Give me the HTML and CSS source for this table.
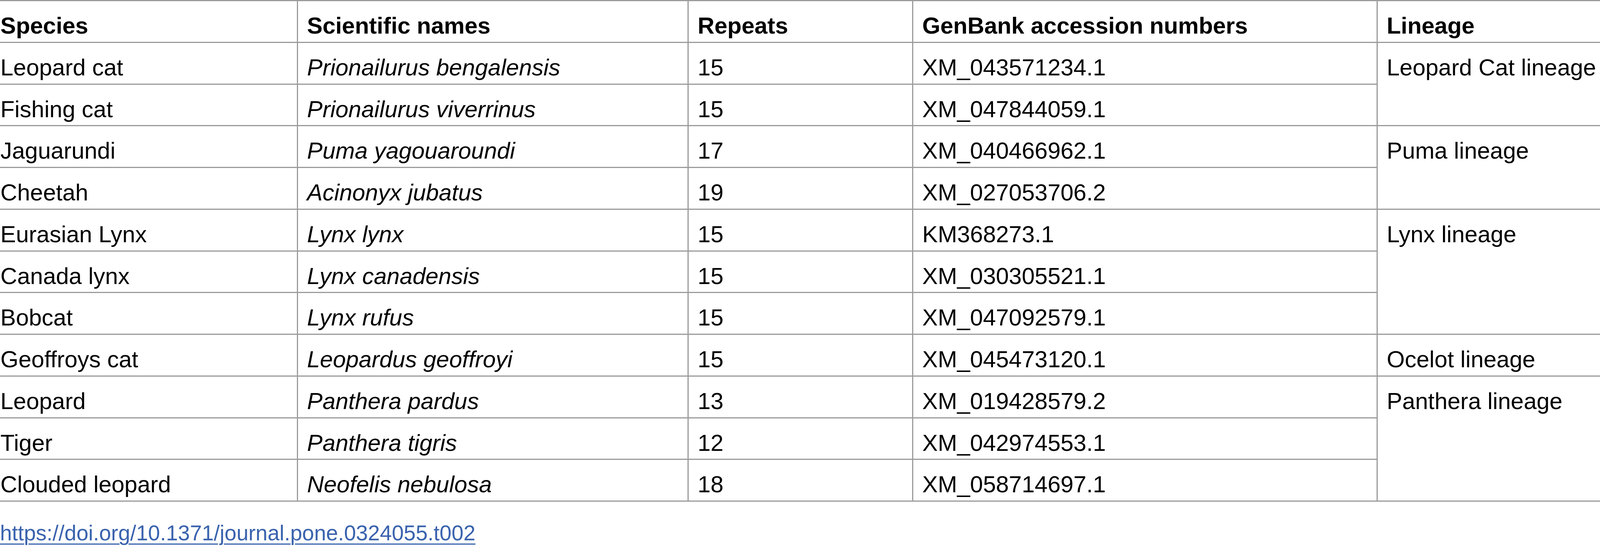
FILE: index.html
```html
<!DOCTYPE html>
<html lang="en">
<head>
<meta charset="utf-8">
<title>Table 2</title>
<link rel="stylesheet" href="styles.css">
</head>
<body>
<div class="page">
  <table class="data">
    <colgroup>
      <col class="c1"><col class="c2"><col class="c3"><col class="c4"><col class="c5">
    </colgroup>
    <thead>
      <tr><th>Species</th><th>Scientific names</th><th>Repeats</th><th>GenBank accession numbers</th><th class="last">Lineage</th></tr>
    </thead>
    <tbody>
      <tr><td>Leopard cat</td><td class="sci">Prionailurus bengalensis</td><td>15</td><td>XM_043571234.1</td><td class="last" rowspan="2">Leopard Cat lineage</td></tr>
      <tr><td>Fishing cat</td><td class="sci">Prionailurus viverrinus</td><td>15</td><td>XM_047844059.1</td></tr>
      <tr><td>Jaguarundi</td><td class="sci">Puma yagouaroundi</td><td>17</td><td>XM_040466962.1</td><td class="last" rowspan="2">Puma lineage</td></tr>
      <tr><td>Cheetah</td><td class="sci">Acinonyx jubatus</td><td>19</td><td>XM_027053706.2</td></tr>
      <tr><td>Eurasian Lynx</td><td class="sci">Lynx lynx</td><td>15</td><td>KM368273.1</td><td class="last" rowspan="3">Lynx lineage</td></tr>
      <tr><td>Canada lynx</td><td class="sci">Lynx canadensis</td><td>15</td><td>XM_030305521.1</td></tr>
      <tr><td>Bobcat</td><td class="sci">Lynx rufus</td><td>15</td><td>XM_047092579.1</td></tr>
      <tr><td>Geoffroys cat</td><td class="sci">Leopardus geoffroyi</td><td>15</td><td>XM_045473120.1</td><td class="last">Ocelot lineage</td></tr>
      <tr><td>Leopard</td><td class="sci">Panthera pardus</td><td>13</td><td>XM_019428579.2</td><td class="last" rowspan="3">Panthera lineage</td></tr>
      <tr><td>Tiger</td><td class="sci">Panthera tigris</td><td>12</td><td>XM_042974553.1</td></tr>
      <tr><td>Clouded leopard</td><td class="sci">Neofelis nebulosa</td><td>18</td><td>XM_058714697.1</td></tr>
    </tbody>
  </table>
  <div class="doi"><a href="#">https://doi.org/10.1371/journal.pone.0324055.t002</a></div>
</div>
</body>
</html>
```

FILE: styles.css
```css
html, body {
  margin: 0;
  padding: 0;
  background: #ffffff;
  overflow: hidden;
}

.page {
  width: 100%;
  height: 1400px;
  overflow: hidden;
  font-family: "Liberation Sans", Arial, sans-serif;
  color: #000000;
}

.data {
  border-collapse: collapse;
  table-layout: fixed;
  width: 4121px;
  margin-left: -25px;
  font-size: 59.5px;
}

.c1 { width: 785px; }
.c2 { width: 1000px; }
.c3 { width: 575px; }
.c4 { width: 1189px; }
.c5 { width: 572px; }

.data th,
.data td {
  border: 3px solid #9b9b9b;
  padding: 25px 23px 3.75px 23px;
  line-height: 75px;
  text-align: left;
  vertical-align: top;
  white-space: nowrap;
}

.data th.last,
.data td.last {
  border-right: 0;
  padding-right: 0;
}

.data th {
  font-weight: bold;
}

.data td.sci {
  font-style: italic;
}

.doi {
  margin-top: 46px;
  font-size: 55px;
  line-height: 69px;
}

.doi a {
  color: #3a63ae;
  text-decoration: underline;
  text-decoration-thickness: 3px;
  text-underline-offset: 8px;
}
```
